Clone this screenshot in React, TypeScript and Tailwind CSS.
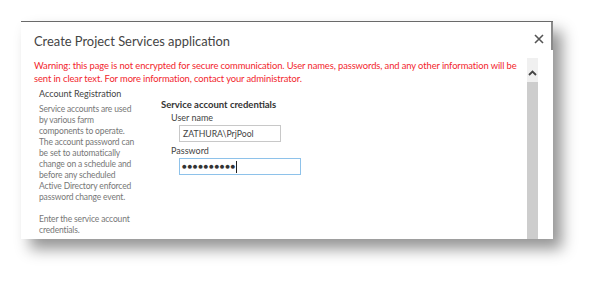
import React from 'react';

const font = { fontFamily: 'Lato, "Open Sans", sans-serif' };

function CloseIcon() {
  return (
    <svg width="10" height="10" viewBox="0 0 10 10" className="text-[#555]">
      <path d="M1 1 L9 9 M9 1 L1 9" stroke="currentColor" strokeWidth="1.6" />
    </svg>
  );
}

function Scrollbar() {
  return (
    <div className="w-[11px] flex flex-col shrink-0">
      <div className="h-[24px] bg-[#f0f0f0] flex items-center justify-center pt-[6px]">
        <svg width="9" height="6" viewBox="0 0 9 6">
          <path d="M1 5 L4.5 1.5 L8 5" fill="none" stroke="#444" strokeWidth="1.8" />
        </svg>
      </div>
      <div className="flex-1 bg-[#cdcdcd]" />
    </div>
  );
}

export default function App() {
  return (
    <div className="w-[596px] h-[282px] bg-white overflow-hidden pt-[21px] pl-[21px]" style={font}>
      <div className="relative w-[532px] h-[218px] bg-white border-t border-[#6a6a6a] shadow-[9px_10px_14px_rgba(0,0,0,0.42)] flex flex-col">
        <span className="absolute right-0 top-0 w-[2px] h-[28px] bg-[#8a8a8a]" />
        <div className="h-[36px] flex items-start justify-between pl-[13px] pr-[9px] pt-[10px]">
          <h1 className="text-[12.9px] leading-[18px] text-[#444]">
            Create Project Services application
          </h1>
          <div className="pt-[2px]">
            <CloseIcon />
          </div>
        </div>
        <div className="flex flex-1 min-h-0">
          <div className="flex-1 min-w-0 pl-[13px] overflow-hidden">
            <p className="text-[9.4px] leading-[13px] text-[#f2262d] tracking-[-0.1px] pt-[1px] whitespace-nowrap">
              Warning: this page is not encrypted for secure communication. User names, passwords, and any other information will be
              <br />
              sent in clear text. For more information, contact your administrator.
            </p>
            <div className="flex mt-[2px]">
              <div className="w-[122px] pl-[5px] shrink-0">
                <h2 className="text-[9px] leading-[14px] text-[#444]">Account Registration</h2>
                <div className="w-[97px] mt-[3px] text-[8.5px] leading-[11px] text-[#777] tracking-[-0.15px]">
                  <p>
                    Service accounts are used by various farm components to operate. The account password can be set to
                    automatically change on a schedule and before any scheduled Active Directory enforced password change
                    event.
                  </p>
                  <p className="mt-[11px]">Enter the service account credentials.</p>
                </div>
              </div>
              <div className="pl-[5px] pt-[12px]">
                <h3 className="text-[9.5px] leading-[12px] font-bold text-[#333]">
                  Service account credentials
                </h3>
                <div className="pl-[10px]">
                  <label className="block text-[9px] leading-[13px] text-[#444]">User name</label>
                  <div className="ml-[8px] mt-[1px] w-[102px] h-[17px] border border-[#c8c8c8] px-[3px] text-[8.7px] leading-[15px] text-[#444]">
                    ZATHURA\PrjPool
                  </div>
                  <label className="block mt-[2px] text-[9px] leading-[13px] text-[#444]">Password</label>
                  <div className="ml-[8px] mt-[1px] w-[122px] h-[17px] border border-[#8ec2ea] px-[2px] flex items-center">
                    <span className="text-[8px] leading-[15px] text-[#333] tracking-[0.6px]">●●●●●●●●●●</span>
                    <span className="w-[1px] h-[12px] bg-[#222]" />
                  </div>
                </div>
              </div>
            </div>
          </div>
          <Scrollbar />
          <div className="w-[15px] shrink-0" />
        </div>
      </div>
    </div>
  );
}
